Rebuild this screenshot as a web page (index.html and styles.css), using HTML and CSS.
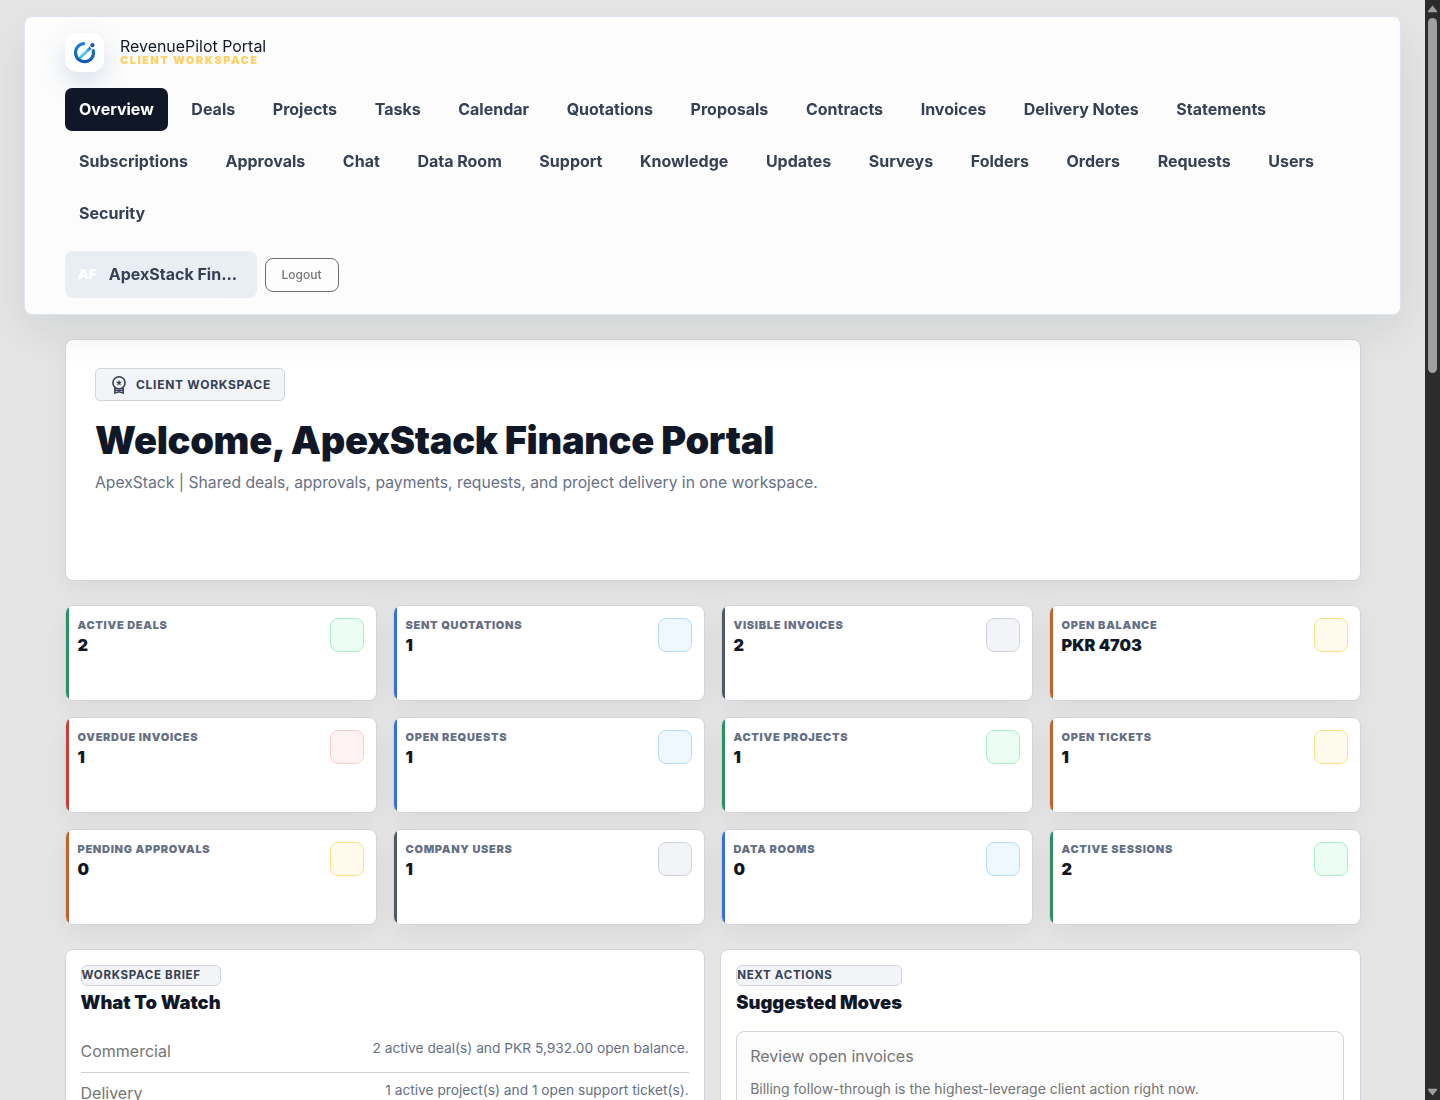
FILE: index.html
```html
<!DOCTYPE html>
<html lang="en">
<head>
<meta charset="utf-8">
<title>RevenuePilot Portal</title>
<link rel="stylesheet" href="styles.css">
</head>
<body>
<div class="page">
  <header class="topbar">
    <div class="brand">
      <span class="brand-mark">
        <svg width="26" height="26" viewBox="0 0 26 26" fill="none">
          <defs>
            <linearGradient id="ring" x1="0" y1="0" x2="0" y2="1"><stop offset="0" stop-color="#1c82dc"/><stop offset="1" stop-color="#125aac"/></linearGradient>
            <linearGradient id="needle" x1="0" y1="1" x2="1" y2="0"><stop offset="0" stop-color="#3cc8d8"/><stop offset=".6" stop-color="#62c5ef"/><stop offset="1" stop-color="#1d6ec1"/></linearGradient>
          </defs>
          <path d="M7.6 18.2L18.6 7.6" stroke="url(#needle)" stroke-width="2.9"/>
          <path d="M11.6 3.7A9 9 0 1 0 21.3 10.6" stroke="url(#ring)" stroke-width="3.2" stroke-linecap="round"/>
          <circle cx="20.4" cy="5.2" r="2.1" fill="#1759a8"/>
        </svg>
      </span>
      <div class="brand-text"><span class="brand-name">RevenuePilot Portal</span><span class="brand-sub">Client Workspace</span></div>
    </div>
    <nav class="nav">
      <a class="active">Overview</a><a>Deals</a><a>Projects</a><a>Tasks</a><a>Calendar</a><a>Quotations</a><a>Proposals</a><a>Contracts</a><a>Invoices</a><a>Delivery Notes</a><a>Statements</a><a>Subscriptions</a><a>Approvals</a><a>Chat</a><a>Data Room</a><a>Support</a><a>Knowledge</a><a>Updates</a><a>Surveys</a><a>Folders</a><a>Orders</a><a>Requests</a><a>Users</a><a>Security</a>
    </nav>
    <div class="account">
      <div class="account-chip"><span class="initials">AF</span><span class="account-name">ApexStack Fin...</span></div>
      <button class="logout">Logout</button>
    </div>
  </header>
  <main class="content">
    <section class="hero">
      <span class="eyebrow">
        <svg width="18" height="20" viewBox="0 0 18 20" fill="none" stroke="#344054" stroke-width="1.6">
          <circle cx="9" cy="7.8" r="6.1"/>
          <path d="M4.9 12.3V17.9L9 16.8L13.1 17.9V12.3" stroke-linejoin="miter"/><path d="M4.8 14.9Q9 16.2 13.2 14.9" stroke-width="1.2"/>
          <path d="M9 4.7L9.8 6.8H12L10.3 8.2L10.9 10.4L9 9.2L7.1 10.4L7.7 8.2L6 6.8H8.2Z" fill="#344054" stroke="none"/>
        </svg>Client Workspace</span>
      <h1>Welcome, ApexStack Finance Portal</h1>
      <p>ApexStack | Shared deals, approvals, payments, requests, and project delivery in one workspace.</p>
    </section>
    <section class="stats">
      <article class="stat green"><div><span class="label">Active Deals</span><strong>2</strong></div><i></i></article>
      <article class="stat blue"><div><span class="label">Sent Quotations</span><strong>1</strong></div><i></i></article>
      <article class="stat slate"><div><span class="label">Visible Invoices</span><strong>2</strong></div><i></i></article>
      <article class="stat amber"><div><span class="label">Open Balance</span><strong>PKR 4703</strong></div><i></i></article>
      <article class="stat red"><div><span class="label">Overdue Invoices</span><strong>1</strong></div><i></i></article>
      <article class="stat blue"><div><span class="label">Open Requests</span><strong>1</strong></div><i></i></article>
      <article class="stat green"><div><span class="label">Active Projects</span><strong>1</strong></div><i></i></article>
      <article class="stat amber"><div><span class="label">Open Tickets</span><strong>1</strong></div><i></i></article>
      <article class="stat amber"><div><span class="label">Pending Approvals</span><strong>0</strong></div><i></i></article>
      <article class="stat slate"><div><span class="label">Company Users</span><strong>1</strong></div><i></i></article>
      <article class="stat blue"><div><span class="label">Data Rooms</span><strong>0</strong></div><i></i></article>
      <article class="stat green"><div><span class="label">Active Sessions</span><strong>2</strong></div><i></i></article>
    </section>
    <section class="panels">
      <article class="panel">
        <div class="panel-head"><span class="tag">Workspace Brief</span><h2>What To Watch</h2></div>
        <div class="brief"><span>Commercial</span><small>2 active deal(s) and PKR 5,932.00 open balance.</small></div>
        <div class="brief"><span>Delivery</span><small>1 active project(s) and 1 open support ticket(s).</small></div>
      </article>
      <article class="panel">
        <div class="panel-head"><span class="tag">Next Actions</span><h2>Suggested Moves</h2></div>
        <div class="move"><span>Review open invoices</span><small>Billing follow-through is the highest-leverage client action right now.</small></div>
      </article>
    </section>
  </main>
</div>
<div class="scrollbar">
  <svg width="9" height="8" viewBox="0 0 9 8"><path d="M4.5 .5L9 6V7.3H0V6Z" fill="#9f9f9f"/></svg>
  <span class="thumb"></span>
  <svg class="down" width="9" height="8" viewBox="0 0 9 8"><path d="M0 0.7H9V2L4.5 7.5L0 2Z" fill="#9f9f9f"/></svg>
</div>
</body>
</html>
```
FILE: styles.css
```css
* { box-sizing: border-box; }
body {
  margin: 0;
  height: 1100px;
  display: flex;
  overflow: hidden;
  background: #e5e5e5;
  color: #101828;
  font: 16px/1.5 Inter, sans-serif;
}
.page { flex: 1; min-width: 0; height: 1100px; overflow: hidden; padding-top: 16px; }
.topbar {
  width: 1377px;
  height: 299px;
  margin: 0 24px;
  padding: 16px 40px;
  border: 1px solid #dbe5f1;
  border-radius: 8px;
  background: #fcfcfc;
  box-shadow: 0 18px 44px rgba(15, 23, 42, .08);
  position: relative;
  will-change: transform;
}
.brand { display: flex; align-items: center; gap: 16px; height: 39px; }
.brand-mark {
  width: 39px;
  height: 39px;
  display: grid;
  place-items: center;
  border-radius: 12px;
  background: #fff;
  box-shadow: 0 10px 24px rgba(30, 90, 160, .17);
}
.brand-text { display: flex; flex-direction: column; }
.brand-name { font-size: 15.95px; line-height: 15px; }
.brand-sub { font-size: 11px; line-height: 12px; font-weight: 900; letter-spacing: 1.48px; text-transform: uppercase; color: #ffd166; }
.nav { display: flex; flex-wrap: wrap; gap: 9px 9.58px; margin-top: 16px; }
.nav a { height: 43px; padding: 0 14px; border-radius: 7px; font-weight: 700; line-height: 43px; color: #344054; }
.nav .active { background: #101828; color: #fff; }
.account { display: flex; align-items: center; gap: 8px; margin-top: 16px; }
.account-chip { display: flex; align-items: center; gap: 12px; width: 192px; height: 47px; padding: 0 13px; border-radius: 8px; background: #e9eef5; }
.initials { font-size: 13.6px; font-weight: 900; color: #fff; }
.account-name { white-space: nowrap; font-weight: 700; line-height: 22px; padding-bottom: 1px; color: #344054; }
.logout { width: 74px; height: 34px; padding: 1px 1px 0 0; border: 1px solid #6b6b6b; border-radius: 8px; background: transparent; color: #757575; font: 500 12px/1 Inter, sans-serif; }

.content { width: 1296px; margin: 24px auto 0; display: grid; gap: 24px; }
.hero {
  height: 242px;
  padding: 28px 29.5px;
  border: 1px solid #d0d5e0;
  border-radius: 8px;
  background: #fff;
  box-shadow: 0 8px 24px rgba(15, 23, 42, .05);
}
.eyebrow { display: flex; align-items: center; gap: 8px; width: 190px; height: 33px; padding-left: 14px; border: 1px solid #d0d5dd; border-radius: 5px; background: #f2f4f8; color: #344054; font-size: 12px; font-weight: 700; letter-spacing: .72px; text-transform: uppercase; white-space: nowrap; }
h1 { margin: 18px 0 0; font-size: 38px; line-height: 42px; font-weight: 900; letter-spacing: -.32px; }
.hero p { margin: 10px 0 0; font-size: 15.69px; line-height: 24px; color: #667085; }

.stats { display: grid; grid-template-columns: repeat(4, 1fr); gap: 16px; }
.stat { display: flex; justify-content: space-between; position: relative; height: 96px; padding: 12px; border: 1px solid #d0d5e0; border-radius: 8px; background: #fff; box-shadow: 0 8px 24px rgba(15, 23, 42, .05); overflow: hidden; }
.stat::before { content: ""; position: absolute; inset: 0 auto 0 0; width: 3px; background: var(--accent); }
.stat .label { display: block; font-size: 11px; line-height: 14px; font-weight: 900; letter-spacing: .69px; text-transform: uppercase; color: #667085; }
.stat strong { display: block; margin-top: 4px; font-size: 16.3px; line-height: 18px; font-weight: 900; }
.stat i { width: 34px; height: 34px; border: 1px solid var(--edge); border-radius: 8px; background: var(--tint); }
.green { --accent: #2a9065; --edge: #abefc6; --tint: #ecfdf3; }
.blue { --accent: #3970d4; --edge: #b2ddff; --tint: #eff8ff; }
.slate { --accent: #505969; --edge: #d0d5dd; --tint: #f2f4f7; }
.amber { --accent: #c2622d; --edge: #fedf89; --tint: #fffaeb; }
.red { --accent: #c2413a; --edge: #fecdca; --tint: #fef3f2; }

.panels { display: grid; grid-template-columns: 1fr 1fr; gap: 15.4px; }
.panel { height: 420px; padding: 15px; border: 1px solid #d0d5e0; border-radius: 8px; background: #fff; }
.panel + .panel { padding-right: 15.6px; }
.panel-head { display: flex; flex-direction: column; width: max-content; height: 66px; }
.tag { height: 21px; border: 1px solid #d0d5dd; border-radius: 6px; background: #f2f4f8; color: #344054; font-size: 11.52px; line-height: 18px; font-weight: 700; letter-spacing: .69px; text-transform: uppercase; }
h2 { margin: 5px 0 0; font-size: 18.4px; line-height: 23px; font-weight: 900; }
.brief { display: flex; justify-content: space-between; height: 42px; padding-top: 8px; border-bottom: 1px solid #ccd0d5; color: #757575; }
.brief span { line-height: 24px; }
.brief small { font-size: 13.74px; line-height: 18px; color: #667085; }
.move { height: 90px; padding: 12px 13px; border: 1px solid #d0d5e0; border-radius: 8px; background: #fcfcfc; color: #757575; }
.move span { display: block; line-height: 24px; }
.move small { display: block; margin-top: 11px; font-size: 13.98px; line-height: 20px; }

.scrollbar { width: 15px; height: 1100px; display: flex; flex-direction: column; align-items: center; padding-top: 5px; background: #2c2c2c; }
.scrollbar svg { display: block; }
.thumb { width: 9px; height: 355px; margin-top: 5px; border-radius: 5px; background: #9f9f9f; }
.down { margin-top: auto; margin-bottom: 4px; }
```
